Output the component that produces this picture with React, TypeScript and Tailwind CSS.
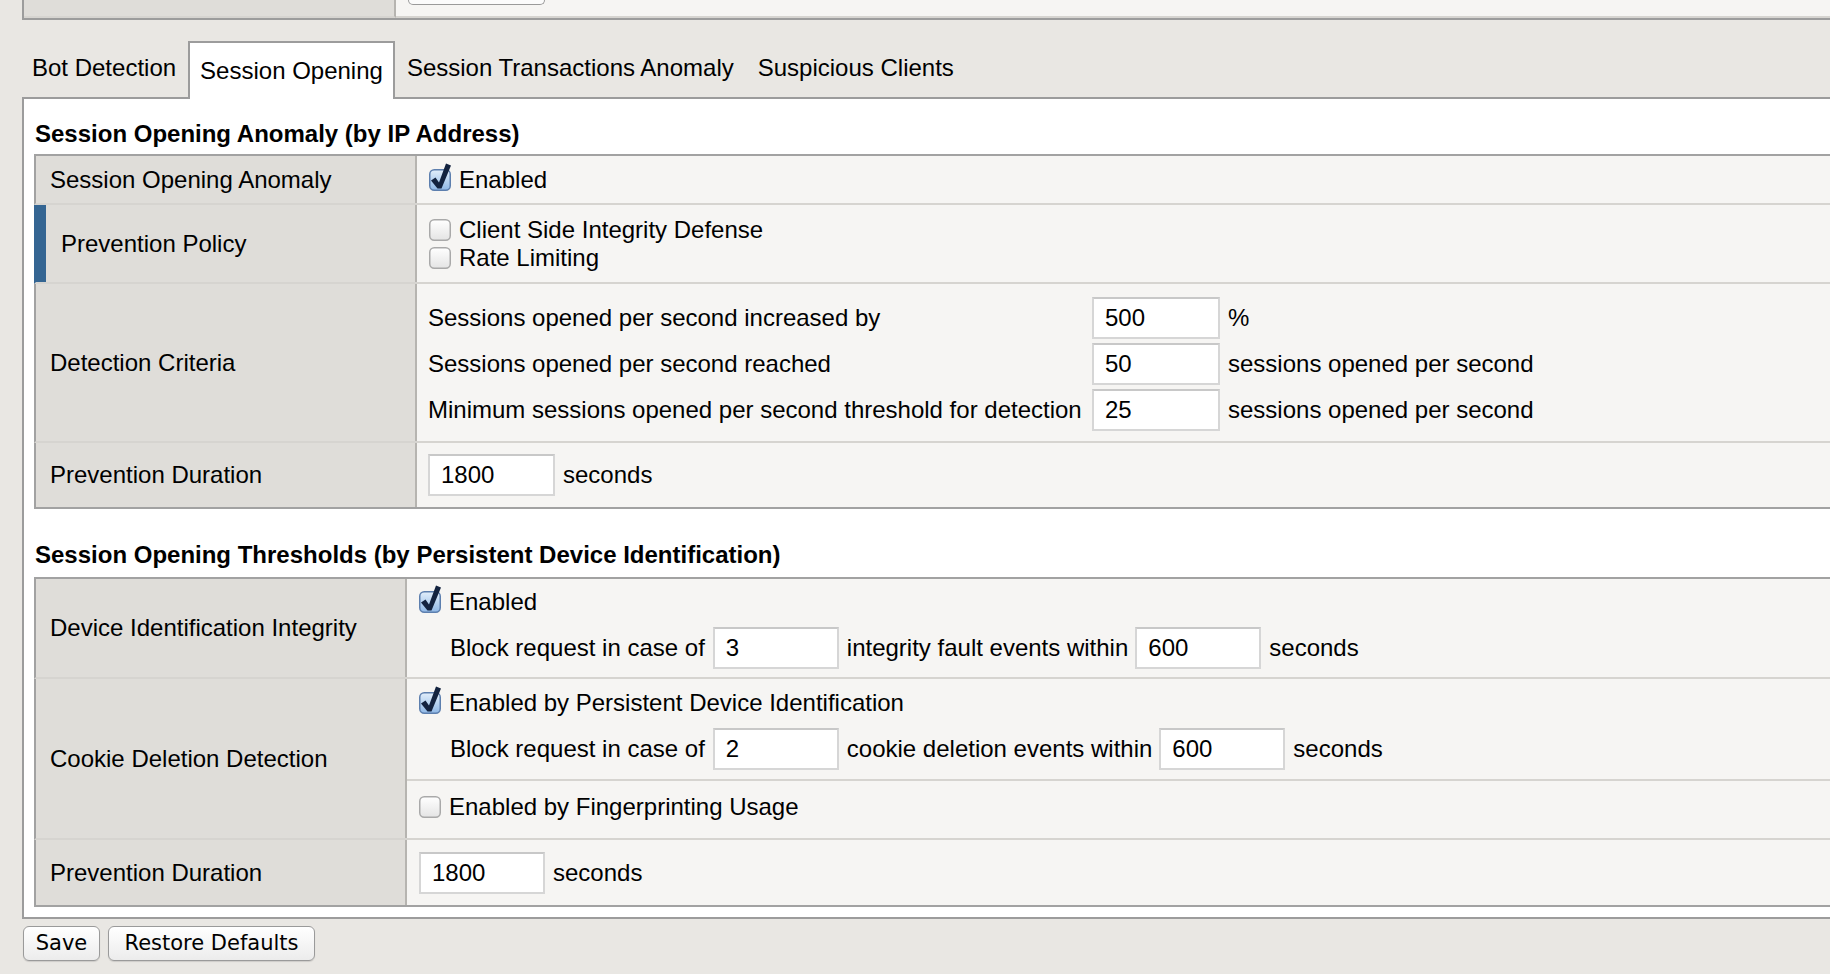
import React from "react"

function Box({ on }: { on?: boolean }) {
  return (
    <svg width="22" height="22" viewBox="0 0 22 22" className="shrink-0 overflow-visible">
      <defs>
        <linearGradient id="boxOn" x1="0" y1="0" x2="0" y2="1">
          <stop offset="0" stopColor="#e2eefa" />
          <stop offset="0.5" stopColor="#b9d4f1" />
          <stop offset="1" stopColor="#8fb8e6" />
        </linearGradient>
        <linearGradient id="boxOff" x1="0" y1="0" x2="0" y2="1">
          <stop offset="0" stopColor="#ffffff" />
          <stop offset="1" stopColor="#e4e4e4" />
        </linearGradient>
      </defs>
      <rect
        x="0.75"
        y="0.75"
        width="20.5"
        height="20.5"
        rx="4.5"
        fill={on ? "url(#boxOn)" : "url(#boxOff)"}
        stroke={on ? "#5d7fae" : "#a9a9a9"}
        strokeWidth="1.5"
      />
      {on && <path d="M2 11.5 L6.5 8.5 L10 13.5 L17 -5.5 L22 -3.5 L12.5 19.5 L8.5 19.5 Z" fill="#13233f" />}
    </svg>
  )
}

function Field({ value, w }: { value: string; w: string }) {
  return (
    <input
      readOnly
      defaultValue={value}
      className={`${w} h-[42px] shrink-0 border-2 border-[#d6d6d6] border-t-[#c8c8c8] bg-white pl-[11px] text-[24px] text-black outline-none`}
    />
  )
}

function Check({ on, children }: { on?: boolean; children: React.ReactNode }) {
  return (
    <div className="flex items-center gap-[8px] h-[30px]">
      <Box on={on} />
      <span>{children}</span>
    </div>
  )
}

export default function App() {
  const criteria = [
    ["Sessions opened per second increased by", "500", "%"],
    ["Sessions opened per second reached", "50", "sessions opened per second"],
    ["Minimum sessions opened per second threshold for detection", "25", "sessions opened per second"],
  ]

  const label1 = "w-[381px] shrink-0 bg-[#dfddd9] border-r-2 border-r-[#b6b4b0] flex items-center pl-[14px]"
  const label2 = "w-[371px] shrink-0 bg-[#dfddd9] border-r-2 border-r-[#b6b4b0] flex items-center pl-[14px]"

  return (
    <div className="w-[1830px] h-[974px] overflow-hidden bg-[#e9e7e3] font-['Liberation_Sans',Arial,sans-serif] text-[24px] leading-[28px] text-black">
      {/* tail of the table above */}
      <div className="ml-[22px] flex h-[20px] border-l-2 border-b-2 border-l-[#9c9c9c] border-b-[#9c9c9c]">
        <div className="w-[372px] bg-[#dfddd9] border-r-2 border-b-2 border-r-[#b6b4b0] border-b-[#d6d4d0]" />
        <div className="flex-1 bg-[#f6f5f3] border-b-2 border-b-[#d6d4d0] pl-[12px]">
          <div className="w-[137px] h-[5px] rounded-b-[6px] border border-t-0 border-[#9a9a9a] bg-[#fbfbfb]" />
        </div>
      </div>

      {/* Tabs */}
      <div className="flex pl-[20px] pt-[21px]">
        <div className="h-[56px] px-[10px] pb-[2px] border-2 border-transparent flex items-center">Bot Detection</div>
        <div className="relative z-10 h-[58px] -mb-[2px] px-[10px] border-2 border-b-0 border-[#9c9c9c] bg-white flex items-center">
          Session Opening
        </div>
        <div className="h-[56px] px-[10px] pb-[2px] border-2 border-transparent flex items-center">Session Transactions Anomaly</div>
        <div className="h-[56px] px-[10px] pb-[2px] border-2 border-transparent flex items-center">Suspicious Clients</div>
      </div>

      {/* Panel */}
      <div className="ml-[22px] border-2 border-r-0 border-[#9c9c9c] bg-white pl-[10px] pt-[21px] pb-[10px]">
        <h2 className="font-bold pl-[1px] mb-[6px]">Session Opening Anomaly (by IP Address)</h2>

        <div className="border-t-2 border-b-2 border-[#a2a2a2]">
          <div className="flex h-[49px] border-l-2 border-l-[#a2a2a2] border-b-2 border-b-[#d6d4d0]">
            <div className={label1}>Session Opening Anomaly</div>
            <div className="flex-1 bg-[#f6f5f3] flex items-center pl-[12px]">
              <Check on>Enabled</Check>
            </div>
          </div>

          <div className="flex h-[79px] border-l-2 border-l-[#346592] border-b-2 border-b-[#d6d4d0]">
            <div className="w-[381px] shrink-0 bg-[#dfddd9] border-r-2 border-r-[#b6b4b0] flex items-stretch">
              <div className="w-[10px] bg-[#346592]" />
              <div className="flex items-center pl-[15px]">Prevention Policy</div>
            </div>
            <div className="flex-1 bg-[#f6f5f3] flex flex-col justify-center pl-[12px]">
              <div className="flex items-center gap-[8px] h-[28px]">
                <Box />
                <span>Client Side Integrity Defense</span>
              </div>
              <div className="flex items-center gap-[8px] h-[28px]">
                <Box />
                <span>Rate Limiting</span>
              </div>
            </div>
          </div>

          <div className="flex h-[159px] border-l-2 border-l-[#a2a2a2] border-b-2 border-b-[#d6d4d0]">
            <div className={label1}>Detection Criteria</div>
            <div className="flex-1 bg-[#f6f5f3] flex flex-col justify-center gap-[4px] pl-[11px] pt-[2px]">
              {criteria.map(([t, v, u]) => (
                <div key={t} className="flex items-center h-[42px]">
                  <span className="w-[664px] shrink-0">{t}</span>
                  <Field value={v} w="w-[128px]" />
                  <span className="ml-[8px]">{u}</span>
                </div>
              ))}
            </div>
          </div>

          <div className="flex h-[64px] border-l-2 border-l-[#a2a2a2]">
            <div className={label1}>Prevention Duration</div>
            <div className="flex-1 bg-[#f6f5f3] flex items-center pl-[11px]">
              <Field value="1800" w="w-[127px]" />
              <span className="ml-[8px]">seconds</span>
            </div>
          </div>
        </div>

        <h2 className="font-bold pl-[1px] mt-[32px] mb-[8px]">Session Opening Thresholds (by Persistent Device Identification)</h2>

        <div className="border-t-2 border-b-2 border-[#a2a2a2]">
          <div className="flex h-[100px] border-l-2 border-l-[#a2a2a2] border-b-2 border-b-[#d6d4d0]">
            <div className={label2}>Device Identification Integrity</div>
            <div className="flex-1 bg-[#f6f5f3] flex flex-col justify-center gap-[10px] pl-[12px]">
              <Check on>Enabled</Check>
              <div className="flex items-center h-[42px] pl-[31px]">
                <span>Block request in case of</span>
                <span className="ml-[8px]"><Field value="3" w="w-[126px]" /></span>
                <span className="ml-[8px]">integrity fault events within</span>
                <span className="ml-[7px]"><Field value="600" w="w-[126px]" /></span>
                <span className="ml-[8px]">seconds</span>
              </div>
            </div>
          </div>

          <div className="flex h-[161px] border-l-2 border-l-[#a2a2a2] border-b-2 border-b-[#d6d4d0]">
            <div className={label2}>Cookie Deletion Detection</div>
            <div className="flex-1 bg-[#f6f5f3] flex flex-col">
              <div className="h-[102px] flex flex-col justify-center gap-[10px] pl-[12px] border-b-2 border-b-[#d6d4d0]">
                <Check on>Enabled by Persistent Device Identification</Check>
                <div className="flex items-center h-[42px] pl-[31px]">
                  <span>Block request in case of</span>
                  <span className="ml-[8px]"><Field value="2" w="w-[126px]" /></span>
                  <span className="ml-[8px]">cookie deletion events within</span>
                  <span className="ml-[7px]"><Field value="600" w="w-[126px]" /></span>
                  <span className="ml-[8px]">seconds</span>
                </div>
              </div>
              <div className="flex-1 flex items-center pl-[12px] pb-[6px]">
                <Check>Enabled by Fingerprinting Usage</Check>
              </div>
            </div>
          </div>

          <div className="flex h-[65px] border-l-2 border-l-[#a2a2a2]">
            <div className={label2}>Prevention Duration</div>
            <div className="flex-1 bg-[#f6f5f3] flex items-center pl-[12px]">
              <Field value="1800" w="w-[126px]" />
              <span className="ml-[8px]">seconds</span>
            </div>
          </div>
        </div>
      </div>

      {/* Buttons */}
      <div className="flex gap-[8px] ml-[23px] mt-[7px] font-['DejaVu_Sans',sans-serif] text-[21px]">
        <button className="w-[77px] h-[35px] rounded-[6px] border border-[#9a9a9a] bg-gradient-to-b from-white to-[#ececec] shadow-[0_1px_1px_rgba(0,0,0,0.12)] leading-none">
          Save
        </button>
        <button className="w-[207px] h-[35px] rounded-[6px] border border-[#9a9a9a] bg-gradient-to-b from-white to-[#ececec] shadow-[0_1px_1px_rgba(0,0,0,0.12)] leading-none">
          Restore Defaults
        </button>
      </div>
    </div>
  )
}
